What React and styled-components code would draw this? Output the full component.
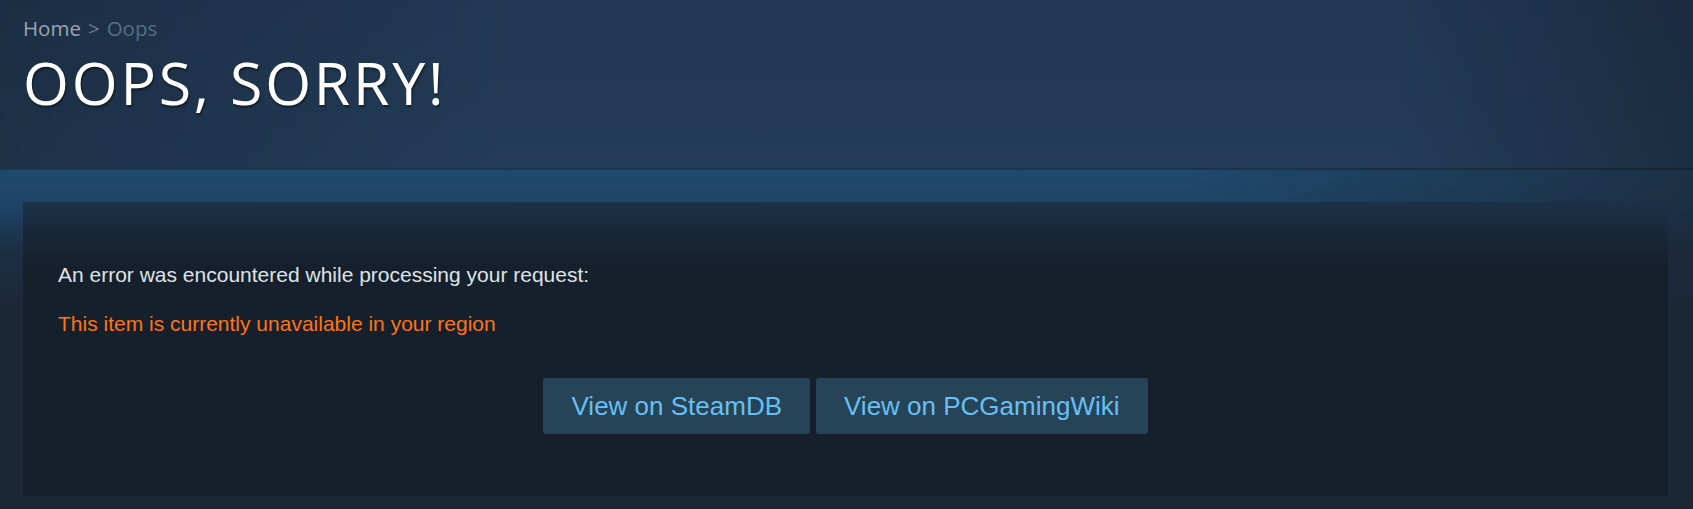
import React from 'react';
import styled, { createGlobalStyle } from 'styled-components';

const GlobalStyle = createGlobalStyle`
    html, body {
        margin: 0;
        padding: 0;
        background: #1b2838;
    }
    body {
        font-family: "Liberation Sans", Arial, sans-serif;
        width: 1693px;
        height: 509px;
        overflow: hidden;
    }
`;

const Header = styled.div`
    padding: 16px 25px 54px 23px;
    background:
        linear-gradient(to right, rgba(18, 28, 40, 0.35) 0%, rgba(18, 28, 40, 0) 30%, rgba(18, 28, 40, 0) 82%, rgba(18, 28, 40, 0.45) 100%),
        linear-gradient(to bottom, #213753 0%, #233c58 100%);
    box-shadow: 0 1px 2px rgba(0, 0, 0, 0.45);
    position: relative;
    z-index: 1;
`;

const Breadcrumbs = styled.div`
    font-family: "Open Sans", sans-serif;
    font-size: 20.5px;
    line-height: 24px;
    color: #56707f;

    & > a {
        color: #9aa4ad;
        text-decoration: none;
    }
    & > span {
        color: #6c7e8c;
        margin: 0 7px;
    }
`;

const Title = styled.h1`
    margin: 10px 0 0;
    font-family: "Open Sans", sans-serif;
    font-weight: 400;
    font-size: 59px;
    line-height: 64px;
    letter-spacing: 2.8px;
    color: #ffffff;
    text-shadow: 1px 2px 2px rgba(0, 0, 0, 0.45);
`;

const Body = styled.div`
    padding: 34px 25px 13px 23px;
    background:
        linear-gradient(to right, rgba(27, 40, 56, 0) 0%, rgba(27, 40, 56, 0) 70%, rgba(27, 40, 56, 0.75) 100%),
        linear-gradient(to bottom, #1f4a6d 0px, #1e4567 34px, #1b2f45 80px, #1b2838 140px);
`;

const Panel = styled.div`
    height: 294px;
    box-sizing: border-box;
    padding: 61px 35px 0;
    background: linear-gradient(to bottom, #1b3149 0px, #182738 32px, #16202d 64px);
`;

const Message = styled.p`
    margin: 0;
    font-size: 21px;
    line-height: 24px;
    color: ${props => (props.error ? '#ff7410' : '#dfe3e6')};
    & + & {
        margin-top: 25px;
    }
`;

const Actions = styled.div`
    display: flex;
    justify-content: center;
    gap: 6px;
    margin-top: 42px;
`;

const Button = styled.a`
    display: block;
    padding: 0 28px;
    height: 56px;
    line-height: 56px;
    font-size: 26px;
    color: #66c0f4;
    background: #274357;
    border-radius: 3px;
    text-decoration: none;
    cursor: pointer;

    &:hover {
        background: #66c0f4;
        color: #ffffff;
    }
`;

const App = () => (
    <>
        <GlobalStyle />
        <Header>
            <Breadcrumbs>
                <a href="#">Home</a>
                <span>&gt;</span>
                Oops
            </Breadcrumbs>
            <Title>OOPS, SORRY!</Title>
        </Header>
        <Body>
            <Panel>
                <Message>An error was encountered while processing your request:</Message>
                <Message error>This item is currently unavailable in your region</Message>
                <Actions>
                    <Button>View on SteamDB</Button>
                    <Button>View on PCGamingWiki</Button>
                </Actions>
            </Panel>
        </Body>
    </>
);

export default App;
